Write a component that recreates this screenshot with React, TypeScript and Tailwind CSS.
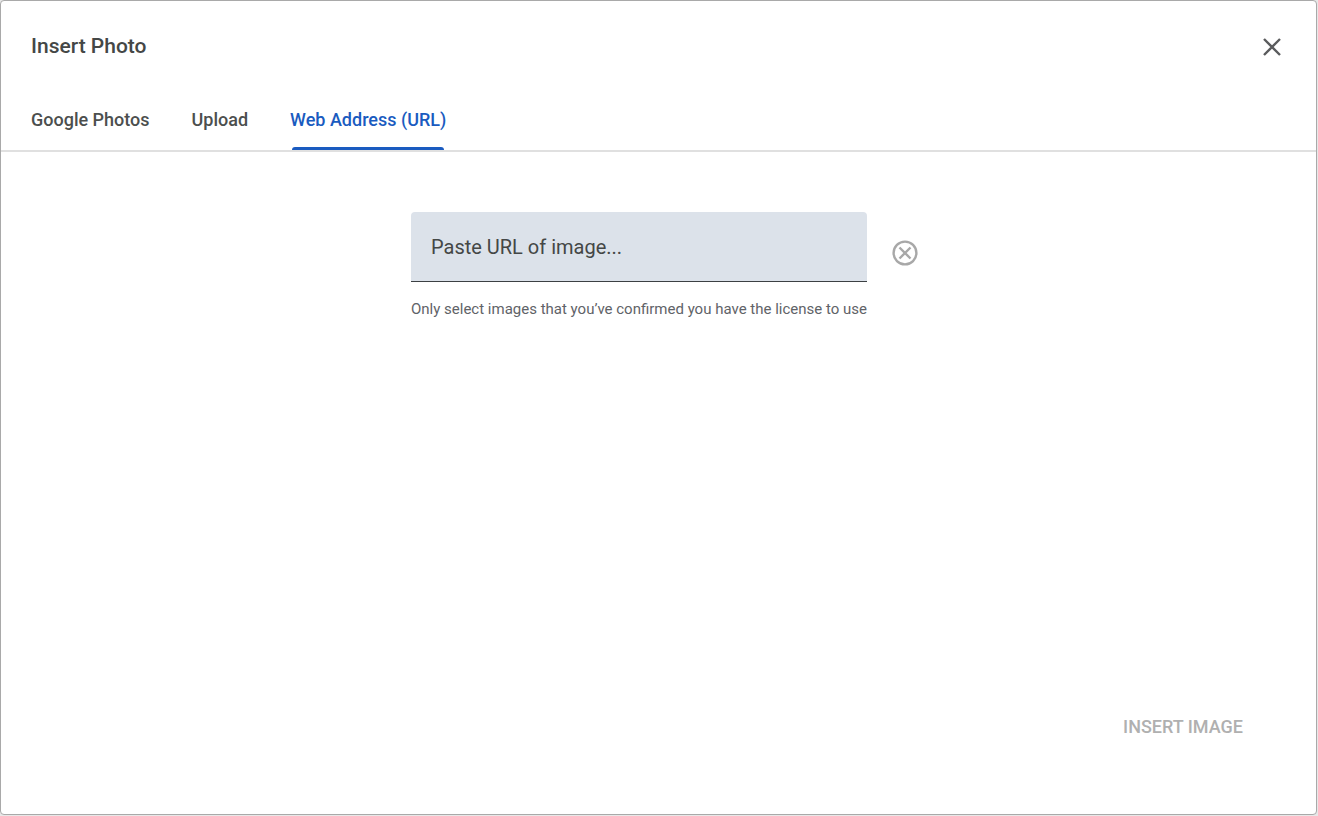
import { useState } from "react"

const tabs = ["Google Photos", "Upload", "Web Address (URL)"]

function CloseIcon() {
  return (
    <svg width="20" height="20" viewBox="0 0 20 20" fill="none" stroke="currentColor" strokeWidth="2.4" aria-hidden="true">
      <path d="M2 2L18 18M18 2L2 18" />
    </svg>
  )
}

function ClearIcon() {
  return (
    <svg width="26" height="26" viewBox="0 0 26 26" fill="none" stroke="currentColor" strokeWidth="2.4" aria-hidden="true">
      <circle cx="13" cy="13" r="11.4" />
      <path d="M7.5 7.5L18.5 18.5M18.5 7.5L7.5 18.5" />
    </svg>
  )
}

export default function App() {
  const [active, setActive] = useState("Web Address (URL)")
  const [url, setUrl] = useState("")

  return (
    <div className="flex min-h-screen bg-[#e8e8e8] pr-px pb-px font-['Roboto',sans-serif]">
      <div role="dialog" aria-labelledby="title" className="flex flex-1 flex-col rounded border border-[#a9a9a9] bg-white">
        <header className="flex items-start justify-between pt-7 pr-[34px] pl-[30px]">
          <h1 id="title" className="text-[21px] leading-[34px] font-medium text-[#444746]">Insert Photo</h1>
          <button type="button" aria-label="Close" className="mt-2 text-[#5a5b5d]">
            <CloseIcon />
          </button>
        </header>

        <div role="tablist" className="mt-[26px] flex gap-[42px] border-b-2 border-[#e0e0e0] px-[30px]">
          {tabs.map((tab) => (
            <button
              key={tab}
              type="button"
              role="tab"
              aria-selected={tab === active}
              onClick={() => setActive(tab)}
              className={`flex flex-col text-lg font-medium ${tab === active ? "text-[#1a5bc0]" : "text-[#4c4f4e]"}`}
            >
              <span className="pt-[17px] pb-[13px] leading-7">{tab}</span>
              <span className={`mx-0.5 h-[3px] self-stretch rounded-t-[3px] ${tab === active ? "bg-[#1a5bc0]" : ""}`} />
            </button>
          ))}
        </div>

        <main className="flex flex-1 justify-center gap-[25px] pt-[60px] pl-3">
          <div className="w-[456px]">
            <input
              type="text"
              aria-label="Image URL"
              aria-describedby="license-note"
              placeholder="Paste URL of image..."
              value={url}
              onChange={(e) => setUrl(e.target.value)}
              className="block h-[70px] w-full rounded-t border-b border-[#3c4043] bg-[#dce2ea] px-5 text-xl text-[#3c4043] outline-none placeholder:text-[#444746]"
            />
            <p id="license-note" className="mt-[15px] text-[15px] leading-6 whitespace-nowrap text-[#5f6368]">
              Only select images that you’ve confirmed you have the license to use
            </p>
          </div>
          <button type="button" aria-label="Clear" onClick={() => setUrl("")} className="mt-7 self-start text-[#a8a8a8]">
            <ClearIcon />
          </button>
        </main>

        <footer className="flex justify-end pr-[73px] pb-[73px]">
          <button type="button" disabled={!url} className="text-lg leading-7 font-medium text-[#b0b0b0]">
            INSERT IMAGE
          </button>
        </footer>
      </div>
    </div>
  )
}
